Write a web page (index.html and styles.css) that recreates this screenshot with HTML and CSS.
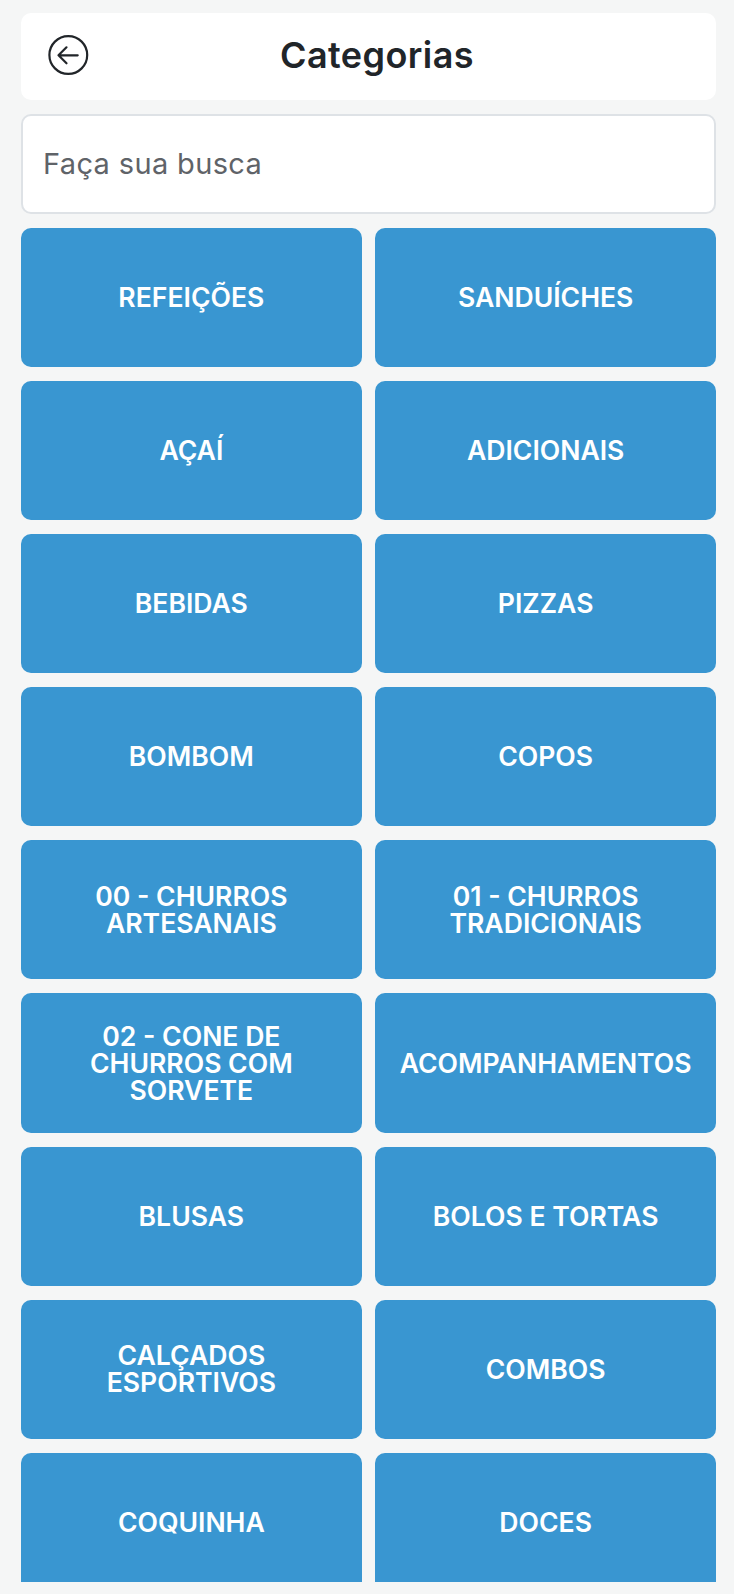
FILE: index.html
```html
<!DOCTYPE html>
<html lang="pt-BR">
<head>
<meta charset="utf-8">
<title>Categorias</title>
<link rel="stylesheet" href="styles.css">
</head>
<body>
<main class="page">
  <header class="topbar">
    <a class="back" href="#" aria-label="Voltar">
      <svg viewBox="0 0 40 40" width="40" height="40" fill="none" stroke="#212529" stroke-linecap="round" stroke-linejoin="round">
        <circle cx="20.300" cy="21" r="18.900" stroke-width="2.200"/>
        <path d="M29.700 21.300H10.500M18.500 13.300L10.500 21.300l8 8" stroke-width="2.200"/>
      </svg>
    </a>
    <h1 class="title">Categorias</h1>
  </header>
  <input class="search" type="text" placeholder="Faça sua busca">
  <nav class="grid">
    <a class="card" href="#">REFEIÇÕES</a>
    <a class="card" href="#">SANDUÍCHES</a>
    <a class="card" href="#">AÇAÍ</a>
    <a class="card" href="#">ADICIONAIS</a>
    <a class="card" href="#">BEBIDAS</a>
    <a class="card" href="#">PIZZAS</a>
    <a class="card" href="#">BOMBOM</a>
    <a class="card" href="#">COPOS</a>
    <a class="card" href="#">00 - CHURROS ARTESANAIS</a>
    <a class="card" href="#">01 - CHURROS TRADICIONAIS</a>
    <a class="card" href="#">02 - CONE DE CHURROS COM SORVETE</a>
    <a class="card" href="#">ACOMPANHAMENTOS</a>
    <a class="card" href="#">BLUSAS</a>
    <a class="card" href="#">BOLOS E TORTAS</a>
    <a class="card" href="#">CALÇADOS ESPORTIVOS</a>
    <a class="card" href="#">COMBOS</a>
    <a class="card" href="#">COQUINHA</a>
    <a class="card" href="#">DOCES</a>
  </nav>
</main>
</body>
</html>
```
FILE: styles.css
```css
* { box-sizing: border-box; }
html, body { margin: 0; height: 100%; background: #f5f6f6; }
body { overflow: hidden; font-family: Inter, "Noto Sans", sans-serif; }
.page {
  height: 1582px;
  overflow: hidden;
  padding: 13px 18px 0 21px;
  display: flex;
  flex-direction: column;
  gap: 14px;
}
.topbar {
  flex: none;
  position: relative;
  height: 87px;
  padding: 0 0 4px 17px;
  background: #fff;
  border-radius: 10px;
  display: flex;
  align-items: center;
  justify-content: center;
}
.back { position: absolute; left: 27px; top: 21px; width: 40px; height: 40px; display: block; }
.back svg { display: block; overflow: visible; }
.title { margin: 0; font-size: 36px; font-weight: 600; color: #212529; letter-spacing: 0.4px; }
.search {
  flex: none;
  width: 100%;
  height: 100px;
  padding: 0 20px 2px;
  background: #fff;
  border: 2px solid #dee2e6;
  border-radius: 10px;
  font: 400 29px Inter, "Noto Sans", sans-serif;
  letter-spacing: 0.350px;
  color: #5f6368;
  outline: none;
}
.search::placeholder { color: #5f6368; opacity: 1; }
.grid {
  flex: none;
  display: grid;
  grid-template-columns: 1fr 1fr;
  grid-auto-rows: 139.100px;
  gap: 14px 13.600px;
}
.card {
  display: flex;
  align-items: center;
  justify-content: center;
  padding: 0 21px;
  background: #3996d1;
  border-radius: 10px;
  color: #fff;
  text-align: center;
  text-decoration: none;
  font-size: 26.600px;
  font-weight: 600;
  line-height: 27px;
}
```
